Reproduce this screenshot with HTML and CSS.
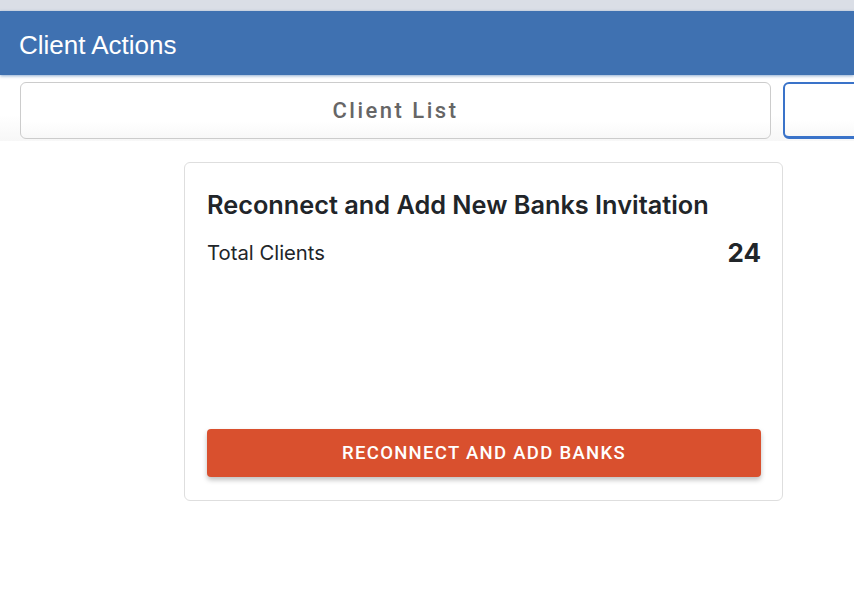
FILE: index.html
```html
<!DOCTYPE html>
<html>
<head>
<meta charset="utf-8">
<link rel="stylesheet" href="styles.css">
</head>
<body>
<div class="topbar"></div>
<header class="header"><h1 class="header-title">Client Actions</h1></header>
<nav class="tabs">
  <button class="tab">Client List</button>
  <button class="tab tab-active"></button>
</nav>
<main class="content">
  <section class="card">
    <h2 class="card-title">Reconnect and Add New Banks Invitation</h2>
    <div class="stat">
      <span class="stat-label">Total Clients</span>
      <span class="stat-value">24</span>
    </div>
    <button class="action">Reconnect and Add Banks</button>
  </section>
</main>
</body>
</html>
```

FILE: styles.css
```css
html, body {
  margin: 0;
  padding: 0;
  background: #fff;
  overflow: hidden;
}
body {
  width: 854px;
  height: 616px;
}
.topbar {
  height: 11px;
  background: #dadee6;
}
.header {
  height: 64px;
  box-sizing: border-box;
  background: #3f71b1;
  display: flex;
  align-items: center;
  padding: 5px 0 0 19px;
  box-shadow: 0 1px 3px rgba(63, 113, 177, 0.6);
  position: relative;
  z-index: 1;
}
.header-title {
  margin: 0;
  font-family: "Liberation Sans", Arial, sans-serif;
  font-weight: 400;
  font-size: 26px;
  color: #fff;
}
.tabs {
  display: flex;
  gap: 12px;
  padding: 7px 20px 2px;
  background: linear-gradient(#fff 60%, #f7f7f7);
  overflow: hidden;
}
.tab {
  flex: 0 0 751px;
  height: 57px;
  box-sizing: border-box;
  border: 1px solid #cccccc;
  border-radius: 6px;
  background: linear-gradient(#fff 70%, #f8f8f8);
  font-family: Roboto, sans-serif;
  font-weight: 500;
  font-size: 22px;
  letter-spacing: 2.5px;
  color: #666;
  padding-top: 1px;
}
.tab-active {
  border: 2px solid #3a73c9;
  border-bottom-width: 3px;
}
.content {
  padding: 21px 0 0 184px;
}
.card {
  width: 599px;
  height: 339px;
  box-sizing: border-box;
  border: 1px solid #dedede;
  border-radius: 6px;
  padding: 26px 21px 23px 22px;
  display: flex;
  flex-direction: column;
  font-family: Inter, sans-serif;
  color: #212529;
}
.card-title {
  margin: 0;
  font-size: 25.3px;
  font-weight: 600;
  line-height: 32px;
}
.stat {
  display: flex;
  justify-content: space-between;
  align-items: center;
  margin-top: 16px;
}
.stat-label {
  font-size: 20.3px;
}
.stat-value {
  font-size: 26px;
  font-weight: 700;
}
.action {
  margin-top: auto;
  height: 48px;
  border: none;
  border-radius: 4px;
  background: #d9502e;
  color: #fff;
  font-family: Roboto, sans-serif;
  font-weight: 500;
  font-size: 18.5px;
  letter-spacing: 1.3px;
  text-transform: uppercase;
  box-shadow: 0 3px 5px rgba(0, 0, 0, 0.25);
}
```
